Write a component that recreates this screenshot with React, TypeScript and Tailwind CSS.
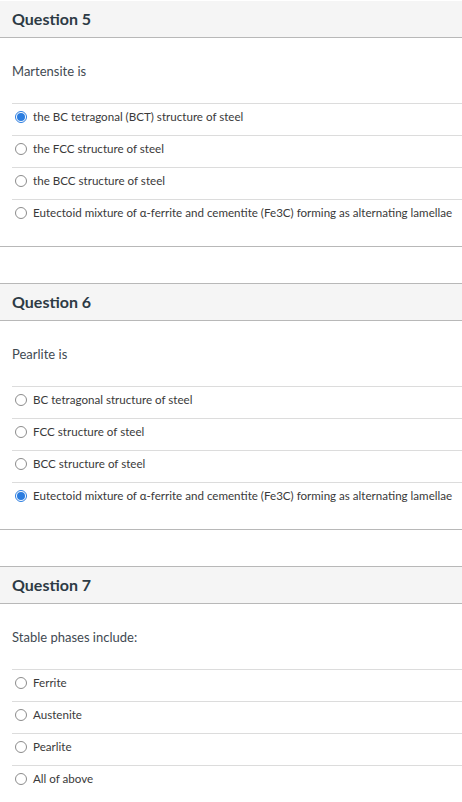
import React from 'react';

type Question = {
  title: string;
  prompt: string;
  options: string[];
  selected: number;
};

const questions: Question[] = [
  {
    title: 'Question 5',
    prompt: 'Martensite is',
    options: [
      'the BC tetragonal (BCT) structure of steel',
      'the FCC structure of steel',
      'the BCC structure of steel',
      'Eutectoid mixture of α-ferrite and cementite (Fe3C) forming as alternating lamellae',
    ],
    selected: 0,
  },
  {
    title: 'Question 6',
    prompt: 'Pearlite is',
    options: [
      'BC tetragonal structure of steel',
      'FCC structure of steel',
      'BCC structure of steel',
      'Eutectoid mixture of α-ferrite and cementite (Fe3C) forming as alternating lamellae',
    ],
    selected: 3,
  },
  {
    title: 'Question 7',
    prompt: 'Stable phases include:',
    options: ['Ferrite', 'Austenite', 'Pearlite', 'All of above'],
    selected: -1,
  },
];

const Radio = ({ checked }: { checked: boolean }) =>
  checked ? (
    <span className="flex h-[12px] w-[12px] shrink-0 items-center justify-center rounded-full border border-[#2b7de0] bg-white">
      <span className="h-[8px] w-[8px] rounded-full bg-[#2b7de0]" />
    </span>
  ) : (
    <span className="h-[12px] w-[12px] shrink-0 rounded-full border border-[#8c8c8c] bg-white" />
  );

const QuestionBlock = ({ q, first }: { q: Question; first: boolean }) => (
  <div
    className={
      first
        ? 'mb-[36px] border-y border-[#b8b8b8] border-t-transparent'
        : 'mb-[36px] border-y border-[#b8b8b8]'
    }
  >
    <div className="flex h-[37px] items-center border-b border-[#b8b8b8] bg-[#f5f5f5] px-[12px]">
      <h2 className="text-[16px] leading-[24px] font-bold text-[#2d3b45]">
        {q.title}
      </h2>
    </div>

    <div className="pb-[15px]">
      <p className="px-[12px] pt-[23px] pb-[22px] text-[13px] leading-[20px] text-[#3f4a52]">
        {q.prompt}
      </p>

      <div className="ml-[12px]">
        {q.options.map((opt, i) => (
          <div
            key={opt}
            className="flex items-center gap-[6px] border-t border-[#dcdcdc] pt-[5px] pb-[10px] pl-[3px]"
          >
            <Radio checked={i === q.selected} />
            <span className="text-[11.6px] leading-[16px] whitespace-nowrap text-[#3a3a3a]">
              {opt}
            </span>
          </div>
        ))}
      </div>
    </div>
  </div>
);

export default function App() {
  return (
    <div
      className="min-h-[802px] w-[462px] overflow-hidden bg-white"
      style={{ fontFamily: 'Lato, "Noto Sans", sans-serif' }}
    >
      {questions.map((q, i) => (
        <QuestionBlock key={q.title} q={q} first={i === 0} />
      ))}
    </div>
  );
}
